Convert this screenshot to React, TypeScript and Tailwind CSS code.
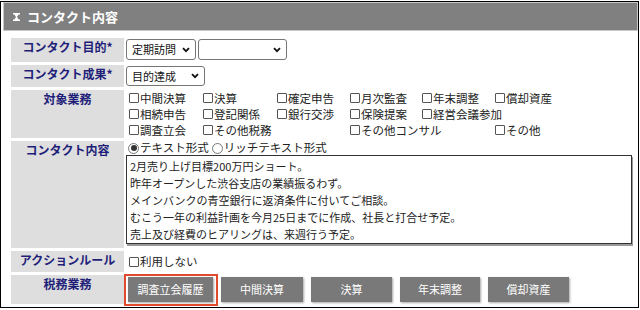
import React from "react";

const checkRows: { label: string; col: number }[][] = [
  [
    { label: "中間決算", col: 0 },
    { label: "決算", col: 1 },
    { label: "確定申告", col: 2 },
    { label: "月次監査", col: 3 },
    { label: "年末調整", col: 4 },
    { label: "償却資産", col: 5 },
  ],
  [
    { label: "相続申告", col: 0 },
    { label: "登記関係", col: 1 },
    { label: "銀行交渉", col: 2 },
    { label: "保険提案", col: 3 },
    { label: "経営会議参加", col: 4 },
  ],
  [
    { label: "調査立会", col: 0 },
    { label: "その他税務", col: 1 },
    { label: "その他コンサル", col: 3 },
    { label: "その他", col: 5 },
  ],
];

const colLeft = [0, 74, 148, 221, 293, 366];

const memo = [
  "2月売り上げ目標200万円ショート。",
  "昨年オープンした渋谷支店の業績振るわず。",
  "メインバンクの青空銀行に返済条件に付いてご相談。",
  "むこう一年の利益計画を今月25日までに作成、社長と打合せ予定。",
  "売上及び経費のヒアリングは、来週行う予定。",
];

const buttons = [
  { label: "調査立会履歴", w: "w-[85px]", marked: true },
  { label: "中間決算", w: "w-[82px]" },
  { label: "決算", w: "w-[81px]" },
  { label: "年末調整", w: "w-[80px]" },
  { label: "償却資産", w: "w-[81px]" },
];

function Chevron() {
  return (
    <svg width="8" height="6" viewBox="0 0 8 6" className="shrink-0">
      <polyline points="1,1.2 4,4.2 7,1.2" fill="none" stroke="#111" strokeWidth="1.8" />
    </svg>
  );
}

function FakeSelect({ value, className }: { value: string; className: string }) {
  return (
    <div
      className={`flex items-center justify-between border border-[#767676] rounded-[3px] bg-white pl-[5px] pr-[5px] text-[11px] text-[#111] ${className}`}
    >
      <span>{value}</span>
      <Chevron />
    </div>
  );
}

function Box() {
  return <span className="inline-block w-[10px] h-[10px] border border-[#555] rounded-[1px] bg-white mr-px shrink-0" />;
}

function Radio({ on }: { on?: boolean }) {
  return (
    <span className="inline-flex items-center justify-center w-[11px] h-[11px] rounded-full border border-[#777] bg-white mr-px shrink-0">
      {on && <span className="w-[6px] h-[6px] rounded-full bg-[#333]" />}
    </span>
  );
}

function Label({ children }: { children: React.ReactNode }) {
  return (
    <div className="bg-[#dedede] text-center text-[#1f1f7a] font-bold text-[12px] leading-[16px] pt-px">
      {children}
    </div>
  );
}

export default function App() {
  return (
    <div className="bg-white pt-px w-[640px] h-[310px] font-['Noto_Sans_CJK_JP','Noto_Sans',sans-serif]">
      <div className="w-[639px] h-[307px] border border-black pl-[2px] flex flex-col">
        {/* header */}
        <div className="h-[29px] border border-[#c8c8c8] bg-[#808080] flex items-center pl-[9px] text-white font-bold text-[13px]">
          <svg width="7" height="8" viewBox="0 0 7 8" className="mr-[7px]">
            <path d="M0 0h7v1.4H0z M1.4 1.4h4.2L4 4l1.6 2.6H1.4L3 4z M0 6.6h7V8H0z" fill="#fff" />
          </svg>
          <span>コンタクト内容</span>
        </div>

        {/* form table */}
        <div className="pl-[8px] pt-[7px] pr-[3px] grid grid-cols-[113px_1fr] grid-rows-[24px_22px_48px_107px_21px_29px] gap-x-[2px] gap-y-[3px] text-[#222]">
          <Label>コンタクト目的*</Label>
          <div className="flex items-start gap-[2px] pt-px">
            <FakeSelect value="定期訪問" className="w-[70px] h-[21px]" />
            <FakeSelect value="" className="w-[89px] h-[21px]" />
          </div>

          <Label>コンタクト成果*</Label>
          <div className="pt-px">
            <FakeSelect value="目的達成" className="w-[79px] h-[20px]" />
          </div>

          <Label>対象業務</Label>
          <div className="pl-[3px] text-[11.5px] leading-[16px]">
            {checkRows.map((row, i) => (
              <div key={i} className="relative h-[16px]">
                {row.map((c) => (
                  <span
                    key={c.label}
                    className="absolute top-0 flex items-center h-[16px] whitespace-nowrap"
                    style={{ left: colLeft[c.col] }}
                  >
                    <Box />
                    {c.label}
                  </span>
                ))}
              </div>
            ))}
          </div>

          <Label>コンタクト内容</Label>
          <div className="pl-0">
            <div className="h-[14px] flex items-center pl-[2px] text-[11.5px]">
              <Radio on />
              <span className="mr-[3px]">テキスト形式</span>
              <Radio />
              <span>リッチテキスト形式</span>
            </div>
            <div className="w-[506px] h-[89px] border border-[#333] shadow-[1px_2px_0_#999] bg-white pl-[3px] pt-[2px] text-[11px] leading-[17px] text-[#222]">
              {memo.map((m) => (
                <div key={m}>{m}</div>
              ))}
            </div>
          </div>

          <Label>アクションルール</Label>
          <div className="flex items-center pl-[3px] text-[11.5px]">
            <Box />
            利用しない
          </div>

          <Label>税務業務</Label>
          <div className="flex items-start gap-[8px] pl-[2px] pt-[2px]">
            {buttons.map((b) => (
              <div key={b.label} className={`relative ${b.w} h-[25px]`}>
                <div className="w-full h-full bg-[#797979] text-white text-[11px] flex items-center justify-center shadow-[1px_1px_2px_rgba(0,0,0,0.35)]">
                  {b.label}
                </div>
                {b.marked && (
                  <div className="absolute -left-[4px] -top-[3px] -right-[5px] -bottom-[4px] border-2 border-[#e14b2d]" />
                )}
              </div>
            ))}
          </div>
        </div>
      </div>
    </div>
  );
}
